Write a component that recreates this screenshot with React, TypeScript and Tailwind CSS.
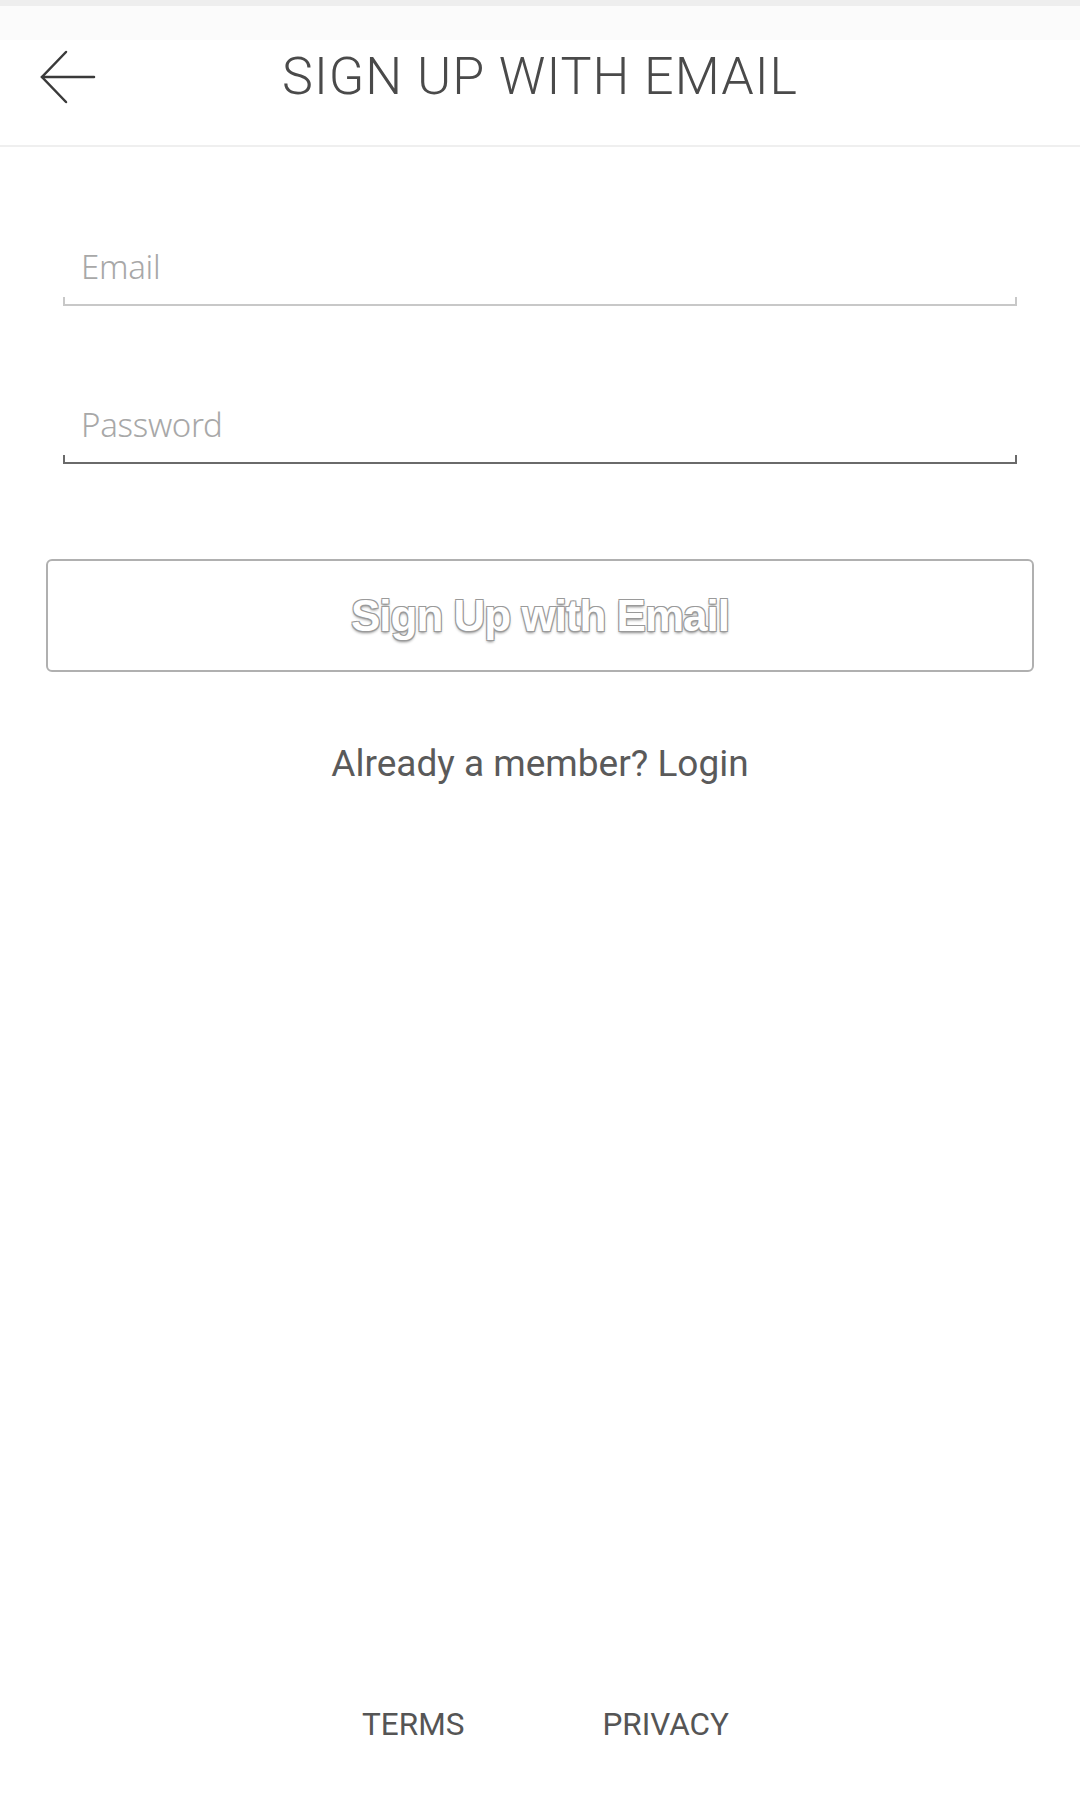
import React from "react";

function BackArrow() {
  return (
    <svg width="56" height="54" viewBox="0 0 56 54" fill="none" stroke="#3a3a3a" strokeWidth="2.5" strokeLinecap="round">
      <path d="M2 27 H54" />
      <path d="M26 2 L2 27 L26 52" />
    </svg>
  );
}

function Field({ label, focused }: { label: string; focused?: boolean }) {
  return (
    <div className="flex flex-col">
      <span className="pl-[18px] text-[33px] leading-[40px] font-light text-[#a8a8a8] [font-family:'Noto_Sans',sans-serif] tracking-[-0.3px]">
        {label}
      </span>
      <div
        className={
          focused
            ? "mt-[10px] h-[9px] border-x-2 border-b-2 border-[#6a6a6a]"
            : "mt-[10px] h-[9px] border-x-2 border-b-2 border-[#c8c8c8]"
        }
      />
    </div>
  );
}

export default function App() {
  return (
    <main className="min-h-screen bg-white flex flex-col [font-family:Roboto,sans-serif]">
      <div className="h-[6px] bg-[#eeeeee]" />
      <div className="h-[34px] bg-[#fbfbfb]" />

      <header className="h-[107px] pb-[32px] flex items-center border-b-2 border-[#efefef] relative">
        <div className="pl-[40px]">
          <BackArrow />
        </div>
        <h1 className="absolute left-0 right-0 text-center text-[52px] font-light text-[#4a4a4a] tracking-[1px]">
          SIGN UP WITH EMAIL
        </h1>
      </header>

      <section className="px-[63px] pt-[100px] flex flex-col gap-[99px]">
        <Field label="Email" />
        <Field label="Password" focused />
      </section>

      <section className="px-[46px] pt-[95px]">
        <button className="w-full h-[113px] rounded-[6px] border-2 border-[#b0b0b0] bg-white flex items-center justify-center">
          <span className="text-[44px] font-bold text-white tracking-[-1px] [font-family:'Liberation_Sans',Arial,sans-serif] [text-shadow:-1px_-1px_0_#9a9a9a,1px_-1px_0_#9a9a9a,-1px_1px_0_#9a9a9a,1px_1px_0_#9a9a9a,0_2px_3px_#888]">
            Sign Up with Email
          </span>
        </button>
      </section>

      <p className="text-center mt-[64px] text-[37px] text-[#5a5a5a]">
        Already a member? Login
      </p>

      <div className="flex-1" />

      <footer className="flex justify-center gap-[138px] pb-[46px] pl-[11px] text-[31.5px] text-[#555555]">
        <span>TERMS</span>
        <span>PRIVACY</span>
      </footer>
    </main>
  );
}
